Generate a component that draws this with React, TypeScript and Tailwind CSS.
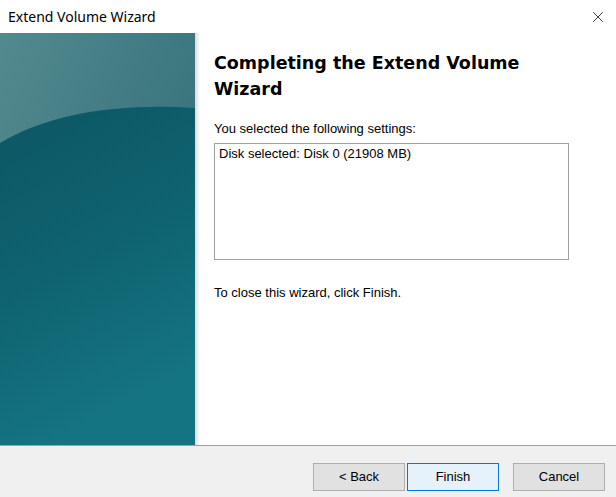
import { X } from 'lucide-react'

function SidePanel() {
  return (
    <svg width="195" height="412" viewBox="0 0 195 412" className="block">
      <defs>
        <linearGradient id="top" x1="0" y1="0" x2="1" y2="1">
          <stop offset="0" stopColor="#528a8e" />
          <stop offset="1" stopColor="#2a6672" />
        </linearGradient>
        <linearGradient id="body" x1="0" y1="0" x2="0.3" y2="1">
          <stop offset="0" stopColor="#0c5663" />
          <stop offset="0.5" stopColor="#0f6270" />
          <stop offset="1" stopColor="#147580" />
        </linearGradient>
      </defs>
      <rect width="195" height="412" fill="url(#top)" />
      <path d="M0 110 C 50 80, 120 70, 195 75 L195 412 L0 412 Z" fill="url(#body)" />
    </svg>
  )
}

function Btn({ label, active }: { label: string; active?: boolean }) {
  return (
    <button
      type="button"
      className={
        active
          ? 'w-[92px] h-[28px] border border-[#0078d7] bg-[#e5f1fb] text-[13px] text-black'
          : 'w-[92px] h-[28px] border border-[#adadad] bg-[#e1e1e1] text-[13px] text-black'
      }
    >
      {label}
    </button>
  )
}

export default function App() {
  return (
    <div className="w-[616px] h-[497px] flex flex-col bg-white overflow-hidden" style={{ fontFamily: '"Liberation Sans", Arial, sans-serif' }}>
      {/* Title bar */}
      <div className="h-[33px] flex items-center justify-between pl-[8px] pr-[9px]">
        <span className="text-[14px] text-black" style={{ fontFamily: '"Noto Sans", "Open Sans", sans-serif' }}>
          Extend Volume Wizard
        </span>
        <X size={18} strokeWidth={1} className="text-black" />
      </div>

      {/* Body */}
      <div className="flex h-[412px]">
        <SidePanel />
        <div className="w-[5px] bg-gradient-to-r from-[#dcdcdc] to-white" />
        <div className="flex-1 pl-[14px] pt-[17px]">
          <h1
            className="text-[17.5px] font-bold leading-[26px] text-black w-[340px]"
            style={{ fontFamily: '"DejaVu Sans", Verdana, sans-serif' }}
          >
            Completing the Extend Volume Wizard
          </h1>
          <p className="mt-[19px] text-[13px] leading-[16px] text-black">You selected the following settings:</p>
          <div className="mt-[6px] w-[355px] h-[117px] border border-[#a0a0a0] px-[4px] py-[2px] text-[13px] leading-[16px] text-black">
            Disk selected: Disk 0 (21908 MB)
          </div>
          <p className="mt-[25px] text-[13px] leading-[16px] text-black">To close this wizard, click Finish.</p>
        </div>
      </div>

      {/* Buttons */}
      <div className="flex-1 border-t border-[#a0a0a0] bg-[#f0f0f0] flex items-start justify-end pt-[17px] pr-[11px]">
        <Btn label="< Back" />
        <div className="w-[2px]" />
        <Btn label="Finish" active />
        <div className="w-[14px]" />
        <Btn label="Cancel" />
      </div>
    </div>
  )
}
